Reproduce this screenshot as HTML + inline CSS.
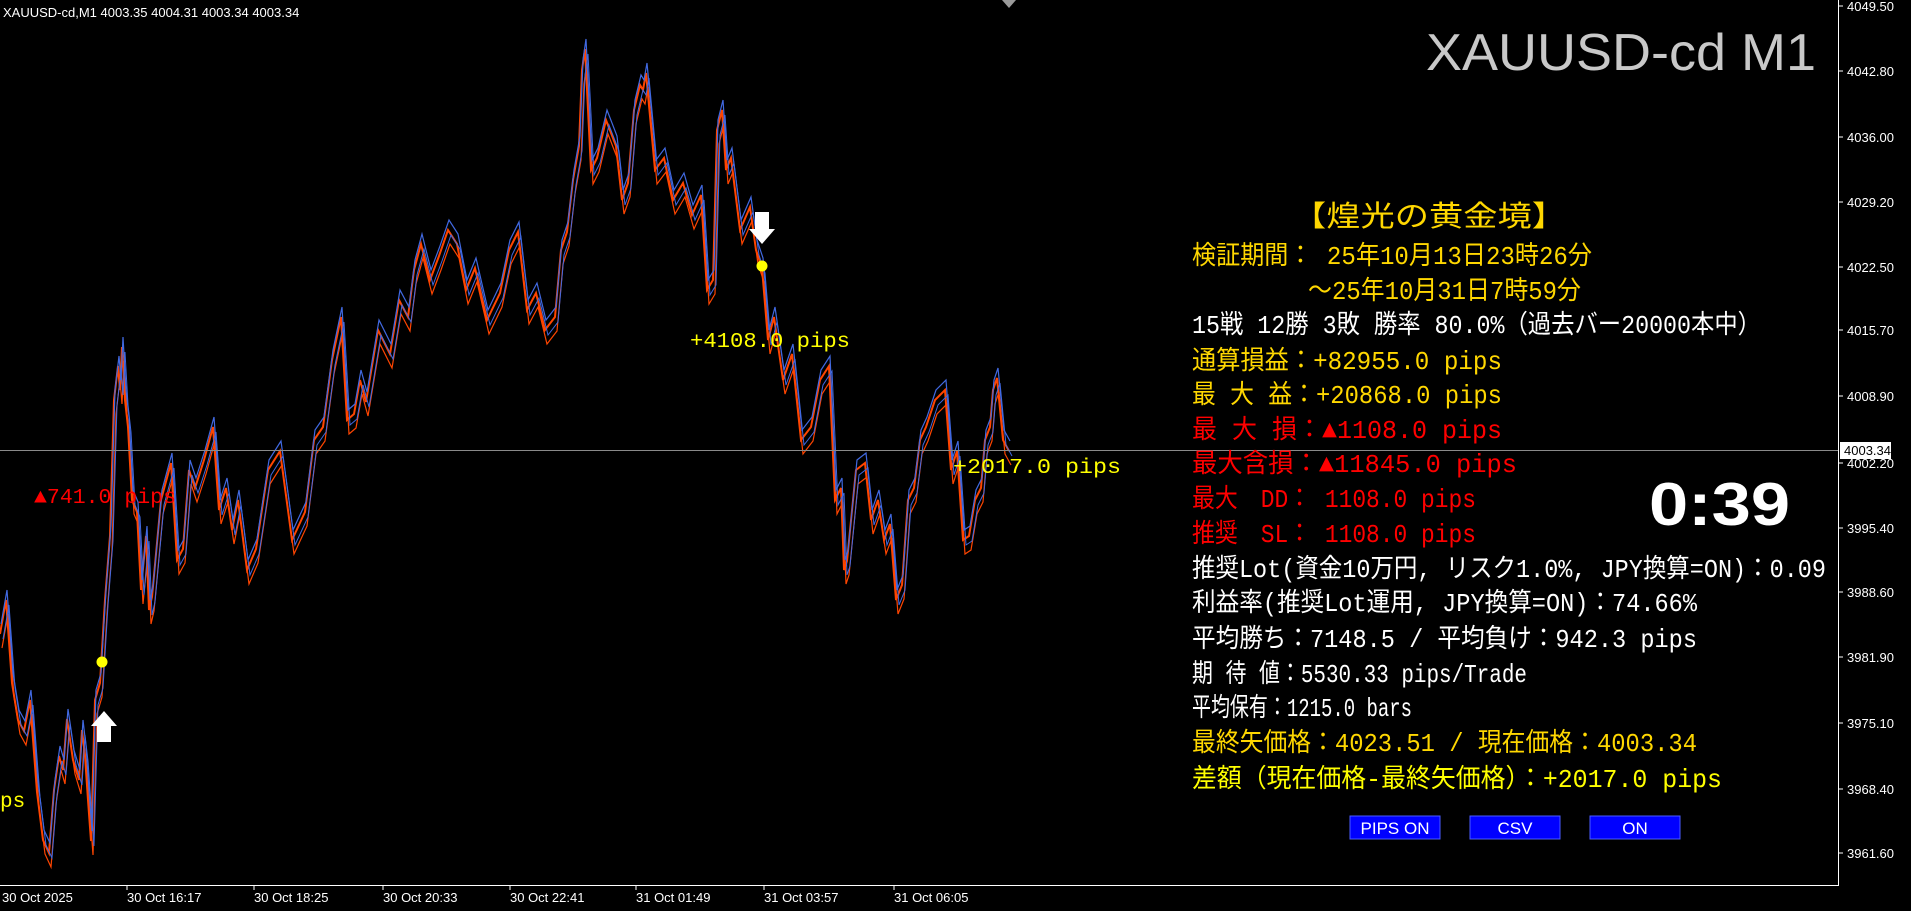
<!DOCTYPE html>
<html><head><meta charset="utf-8"><style>
html,body{margin:0;padding:0;background:#000;width:1911px;height:911px;overflow:hidden}
svg{position:absolute;left:0;top:0}
</style></head><body>
<svg width="1911" height="911" xmlns="http://www.w3.org/2000/svg" font-family="'Liberation Sans','Noto Sans CJK JP',sans-serif">
<defs>
<polyline id="pr" fill="none" points="0,634 6,600 12,683 18,720 24,731 30,700 37,792 43,840 49,853 54,790 59,756 63,770 67,719 73,760 79,780 82,730 85,756 88,800 91,841 95,700 100,683 105,600 110,536 114,400 118,366 120,390 122,347 125,400 128,427 132,500 137,512 141,590 146,536 149,610 152,597 161,500 171,463 177,560 183,549 189,470 195,488 204,460 213,427 219,510 226,488 232,530 238,500 247,570 256,549 268,470 280,451 292,540 305,512 314,440 323,427 332,360 341,317 347,420 354,414 360,380 366,402 378,330 390,354 399,300 408,317 414,270 421,244 430,280 439,256 448,230 457,244 466,290 475,268 487,320 500,293 509,250 518,232 527,310 536,293 545,330 555,317 561,250 567,232 573,180 579,146 582,70 585,49 591,170 597,158 606,120 616,146 622,200 628,183 634,110 640,85 643,90 646,73 655,170 664,158 673,200 683,183 692,215 701,195 707,290 713,280 717,130 722,110 726,170 731,158 740,230 750,207 756,250 762,268 768,340 774,317 783,380 792,354 801,440 811,427 820,380 829,366 835,500 841,488 844,570 847,561 856,470 865,463 871,520 878,500 884,540 890,524 896,600 902,585 908,500 914,488 920,440 926,427 935,400 945,390 951,470 957,451 963,540 969,536 975,500 981,488 985,440 990,427 993,390 997,378 1003,440 1009,451"/>
</defs>
<use href="#pr" stroke="#ff4500" stroke-width="2"/>
<use href="#pr" stroke="#ff4500" stroke-width="1.2" transform="translate(2,14)"/>
<use href="#pr" stroke="#4169e1" stroke-width="1.2" transform="translate(1,-10)"/>
<use href="#pr" stroke="#4169e1" stroke-width="1" transform="translate(3,5)"/>
<line x1="0" y1="450.5" x2="1838" y2="450.5" stroke="#8a8a8a" stroke-width="1"/>
<line x1="1838.5" y1="0" x2="1838.5" y2="886" stroke="#fff" stroke-width="1"/>
<line x1="0" y1="885.5" x2="1839" y2="885.5" stroke="#fff" stroke-width="1"/>
<polygon points="1002,0 1016,0 1009,8" fill="#9a9a9a"/>
<text x="3" y="17" fill="#fff" font-size="13">XAUUSD-cd,M1  4003.35 4004.31 4003.34 4003.34</text>
<text x="1816" y="70" fill="#c8c8c8" font-size="52" text-anchor="end" textLength="390" lengthAdjust="spacingAndGlyphs">XAUUSD-cd M1</text>
<g fill="#fff" font-size="13">
<text x="1847" y="11">4049.50</text><text x="1847" y="76">4042.80</text><text x="1847" y="142">4036.00</text>
<text x="1847" y="207">4029.20</text><text x="1847" y="272">4022.50</text><text x="1847" y="335">4015.70</text>
<text x="1847" y="401">4008.90</text><text x="1847" y="468">4002.20</text><text x="1847" y="533">3995.40</text>
<text x="1847" y="597">3988.60</text><text x="1847" y="662">3981.90</text><text x="1847" y="728">3975.10</text>
<text x="1847" y="794">3968.40</text><text x="1847" y="858">3961.60</text>
</g>
<g stroke="#fff"><line x1="1838" y1="6" x2="1843" y2="6"/><line x1="1838" y1="71" x2="1843" y2="71"/><line x1="1838" y1="137" x2="1843" y2="137"/><line x1="1838" y1="202" x2="1843" y2="202"/><line x1="1838" y1="267" x2="1843" y2="267"/><line x1="1838" y1="330" x2="1843" y2="330"/><line x1="1838" y1="396" x2="1843" y2="396"/><line x1="1838" y1="463" x2="1843" y2="463"/><line x1="1838" y1="528" x2="1843" y2="528"/><line x1="1838" y1="592" x2="1843" y2="592"/><line x1="1838" y1="657" x2="1843" y2="657"/><line x1="1838" y1="723" x2="1843" y2="723"/><line x1="1838" y1="789" x2="1843" y2="789"/><line x1="1838" y1="853" x2="1843" y2="853"/></g>
<rect x="1840" y="442" width="51" height="17" fill="#fff"/>
<text x="1844" y="455" fill="#000" font-size="13">4003.34</text>
<g fill="#fff" font-size="13">
<text x="2" y="902">30 Oct 2025</text><text x="127" y="902">30 Oct 16:17</text><text x="254" y="902">30 Oct 18:25</text>
<text x="383" y="902">30 Oct 20:33</text><text x="510" y="902">30 Oct 22:41</text><text x="636" y="902">31 Oct 01:49</text>
<text x="764" y="902">31 Oct 03:57</text><text x="894" y="902">31 Oct 06:05</text>
</g>
<g stroke="#fff"><line x1="127" y1="885" x2="127" y2="890"/><line x1="254" y1="885" x2="254" y2="890"/><line x1="383" y1="885" x2="383" y2="890"/><line x1="510" y1="885" x2="510" y2="890"/><line x1="636" y1="885" x2="636" y2="890"/><line x1="764" y1="885" x2="764" y2="890"/><line x1="894" y1="885" x2="894" y2="890"/></g>
<circle cx="102" cy="662" r="5.5" fill="#ffff00"/>
<path d="M104 711 L91 726 L97 726 L97 742 L111 742 L111 726 L117 726 Z" fill="#fff"/>
<circle cx="762" cy="266" r="5.5" fill="#ffff00"/>
<path d="M762 244 L749 229 L755 229 L755 212 L769 212 L769 229 L775 229 Z" fill="#fff"/>
<g font-size="21" font-family="'Liberation Mono','Noto Sans CJK JP',monospace">
<text x="690" y="347" fill="#ffff00" textLength="160" lengthAdjust="spacingAndGlyphs">+4108.0 pips</text>
<text x="953" y="473" fill="#ffff00" textLength="168" lengthAdjust="spacingAndGlyphs">+2017.0 pips</text>
<text x="34" y="503" fill="#ff0000" textLength="142" lengthAdjust="spacingAndGlyphs">▲741.0 pips</text>
<text x="0" y="807" fill="#ffff00">ps</text>
</g>
<g font-size="26" font-family="'Liberation Mono','Noto Sans CJK JP',monospace" lengthAdjust="spacingAndGlyphs">
<text x="1292" y="226" fill="#ffd700" font-size="29" textLength="274" lengthAdjust="spacingAndGlyphs">【煌光の黄金境】</text>
<text x="1192" y="264" fill="#ffd700" textLength="400" lengthAdjust="spacingAndGlyphs">検証期間： 25年10月13日23時26分</text>
<text x="1308" y="299" fill="#ffd700" textLength="273" lengthAdjust="spacingAndGlyphs">～25年10月31日7時59分</text>
<text x="1192" y="333" fill="#fff" textLength="569" lengthAdjust="spacingAndGlyphs">15戦 12勝 3敗 勝率 80.0%（過去バー20000本中）</text>
<text x="1192" y="369" fill="#ffd700" textLength="310" lengthAdjust="spacingAndGlyphs">通算損益：+82955.0 pips</text>
<text x="1192" y="403" fill="#ffd700" textLength="310" lengthAdjust="spacingAndGlyphs">最 大 益：+20868.0 pips</text>
<text x="1192" y="438" fill="#ff0000" textLength="310" lengthAdjust="spacingAndGlyphs">最 大 損：▲1108.0 pips</text>
<text x="1192" y="472" fill="#ff0000" textLength="325" lengthAdjust="spacingAndGlyphs">最大含損：▲11845.0 pips</text>
<text x="1192" y="507" fill="#ff0000" textLength="284" lengthAdjust="spacingAndGlyphs">最大　DD： 1108.0 pips</text>
<text x="1192" y="542" fill="#ff0000" textLength="284" lengthAdjust="spacingAndGlyphs">推奨　SL： 1108.0 pips</text>
<text x="1192" y="577" fill="#fff" textLength="634" lengthAdjust="spacingAndGlyphs">推奨Lot(資金10万円, リスク1.0%, JPY換算=ON)：0.09</text>
<text x="1192" y="611" fill="#fff" textLength="505" lengthAdjust="spacingAndGlyphs">利益率(推奨Lot運用, JPY換算=ON)：74.66%</text>
<text x="1192" y="647" fill="#fff" textLength="505" lengthAdjust="spacingAndGlyphs">平均勝ち：7148.5 / 平均負け：942.3 pips</text>
<text x="1192" y="682" fill="#fff" textLength="335" lengthAdjust="spacingAndGlyphs">期 待 値：5530.33 pips/Trade</text>
<text x="1192" y="716" fill="#fff" textLength="220" lengthAdjust="spacingAndGlyphs">平均保有：1215.0 bars</text>
<text x="1192" y="751" fill="#ffd700" textLength="505" lengthAdjust="spacingAndGlyphs">最終矢価格：4023.51 / 現在価格：4003.34</text>
<text x="1192" y="787" fill="#ffff00" textLength="530" lengthAdjust="spacingAndGlyphs">差額（現在価格-最終矢価格）：+2017.0 pips</text>
</g>
<text x="1649" y="525" fill="#fff" font-size="60" font-weight="bold" textLength="141" lengthAdjust="spacingAndGlyphs">0:39</text>
<g font-size="17" fill="#fff" text-anchor="middle">
<rect x="1350" y="816" width="90" height="23" fill="#0000ff" stroke="#4a5cff"/>
<text x="1395" y="834">PIPS ON</text>
<rect x="1470" y="816" width="90" height="23" fill="#0000ff" stroke="#4a5cff"/>
<text x="1515" y="834">CSV</text>
<rect x="1590" y="816" width="90" height="23" fill="#0000ff" stroke="#4a5cff"/>
<text x="1635" y="834">ON</text>
</g>
</svg>
</body></html>
